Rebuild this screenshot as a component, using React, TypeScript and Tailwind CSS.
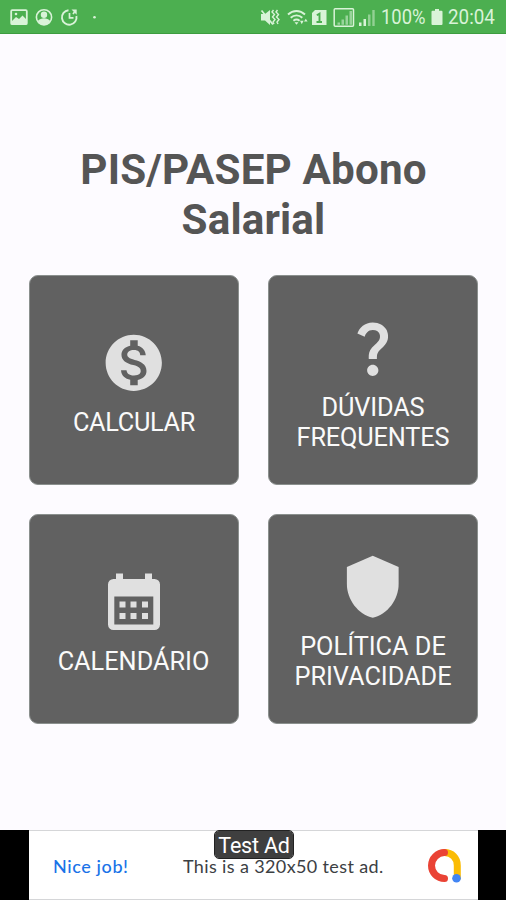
import React from 'react';

interface MenuCardProps {
  lines: string[];
  spacing: string;
  children: React.ReactNode;
}

const MenuCard: React.FC<MenuCardProps> = ({ lines, spacing, children }) => (
  <button className="flex h-[210px] w-[210px] flex-col items-center justify-center rounded-[9px] border border-[#8b908e] bg-[#616161] pt-[6px]">
    {children}
    <span className={`mt-[12px] text-[25.3px] leading-[29.5px] text-[#fafafa] ${spacing}`}>
      {lines.map((line) => (
        <span key={line} className="block whitespace-nowrap">{line}</span>
      ))}
    </span>
  </button>
);

const iconClass = 'h-[67.5px] w-[67.5px] shrink-0 fill-[#e0e0e0]';

const StatusBar = () => (
  <header className="flex h-[34px] items-center justify-between border-b border-[#3d9c40] bg-[#4caf50] pl-[10px] pr-[9px] text-[#d9f3d8]">
    <svg className="h-[34px] w-[90px]" viewBox="10 0 90 34" fill="none">
      <rect x="11.2" y="10.2" width="15.6" height="14" rx="1" stroke="currentColor" strokeWidth="1.8" />
      <path d="M12 21l4-4 3 2 3.500-3.500L26 19v5H12z" fill="currentColor" />
      <circle cx="16" cy="14" r="1.300" fill="currentColor" />
      <circle cx="44" cy="17.300" r="7.600" stroke="currentColor" strokeWidth="1.600" />
      <circle cx="44" cy="14.800" r="3.200" fill="currentColor" />
      <path d="M37.800 21c1.500-2 3.800-2.800 6.200-2.800s4.700.8 6.200 2.800c-1.200 2.500-3.400 4-6.200 4s-5-1.500-6.200-4z" fill="currentColor" />
      <path d="M68.500 10.200a7.300 7.300 0 1 0 7.900 5.800" stroke="currentColor" strokeWidth="1.900" />
      <path d="M69.500 13v4.800H73.500M73 14l1.500-2" stroke="currentColor" strokeWidth="1.700" />
      <path d="M71.500 9.500h5.200v5.200z" fill="currentColor" />
      <circle cx="94.500" cy="17.300" r="1.300" fill="currentColor" />
    </svg>
    <div className="flex items-center">
      <svg className="h-[34px] w-[120px]" viewBox="258 0 120 34" fill="none">
        <path d="M261 14h4l5-4v15l-5-4.500h-4z" fill="currentColor" />
        <path d="M261.500 10.500l11.500 14" stroke="currentColor" strokeWidth="1.700" />
        <path d="M273.500 10l-1.500 2 2.500 2.500-2 2.500 2.500 2.500-2 2.500 1 2M277.500 10l-1.500 2 2.500 2.500-2 2.500 2.500 2.500-2 2.500 1 2" stroke="currentColor" strokeWidth="1.400" />
        <path d="M288 14.500c5-4.700 12-4.700 17 0M290.700 17.700c3.400-3.100 8.200-3.100 11.600 0M293.400 20.700c1.900-1.500 4.300-1.500 6.200 0" stroke="currentColor" strokeWidth="1.900" />
        <path d="M294.500 22.300h4l-2 2.500zM300 20.700h3.600l-1.800 3.600zM304 21.500l1.800-2.800 1.800 2.800z" fill="currentColor" />
        <path d="M315 10h11.500v15H312V13z" fill="currentColor" />
        <path d="M316.800 15.200l2.700-1.600v8.600M316.500 22h5.500" stroke="#4caf50" strokeWidth="1.900" />
        <rect x="334.200" y="8.700" width="19.300" height="17.500" rx="1" stroke="currentColor" strokeWidth="1.500" />
        <path d="M337.500 22.500h2.500v2.300h-2.500zM341.500 19.500h2.500v5.300h-2.500zM345.500 15.500h2.500v9.300h-2.500zM349.500 11h2.500v13.800h-2.500z" fill="currentColor" opacity=".55" />
        <path d="M359 22.500h2.500V26H359zM363.500 19h2.500v7h-2.500z" fill="currentColor" />
        <path d="M368 14.500h2.500V26H368zM372.300 10h2.400v16h-2.400z" fill="currentColor" opacity=".5" />
      </svg>
      <span className="ml-[3px] mt-px w-[46px] origin-left scale-x-[0.92] whitespace-nowrap text-[20px] leading-[34px]">100%</span>
      <svg className="ml-1 h-[18px] w-[12px]" viewBox="0 0 12 18" fill="currentColor">
        <path d="M4 1h4v1.800h2.500a1 1 0 0 1 1 1V16a1 1 0 0 1-1 1h-9a1 1 0 0 1-1-1V3.800a1 1 0 0 1 1-1H4z" />
      </svg>
      <span className="ml-[5px] mr-px mt-px w-[48px] origin-left scale-x-[0.94] whitespace-nowrap text-[20px] leading-[34px]">20:04</span>
    </div>
  </header>
);

const AdBanner = () => (
  <footer className="flex h-[70px] justify-center bg-black">
    <div className="relative ml-px flex w-[449px] items-center border-y border-[#d5d6d8] bg-white font-['Lato',sans-serif] text-[18px]">
      <span className="ml-[24px] mt-[2px] w-[130px] whitespace-nowrap font-medium tracking-[0.6px] text-[#1a73e8]">Nice job!</span>
      <span className="mt-[2px] w-[243px] whitespace-nowrap tracking-[0.37px] text-[#3c4043]">This is a 320x50 test ad.</span>
      <svg className="mt-[2px] h-[36px] w-[36px]" viewBox="0 0 36 36" fill="none" strokeWidth="7" strokeLinecap="round">
        <path d="M18.500 4.600c7.500 0 12.800 5.400 12.800 12.800v12" stroke="#fbbc04" />
        <path d="M18.500 4.600a13 13 0 1 0 0 26" stroke="#ea4335" />
        <circle cx="30.500" cy="30.300" r="4.300" fill="#4285f4" />
      </svg>
      <span className="absolute left-[186px] top-0 h-[27px] w-[78px] whitespace-nowrap rounded-[4px] bg-[#3f3f3f] text-center font-['Roboto',sans-serif] text-[21.500px] leading-[30px] tracking-[-0.2px] text-white outline outline-1 outline-[#222]">Test Ad</span>
    </div>
  </footer>
);

export default function App() {
  return (
    <div className="flex h-[900px] w-[506px] flex-col overflow-hidden bg-[#fdfbff] font-['Roboto',sans-serif]">
      <StatusBar />
      <main className="flex flex-1 flex-col items-center pt-[111px]">
        <h1 className="ml-px text-center text-[42.2px] font-bold leading-[50px] tracking-[0.15px] text-[#555555]">
          PIS/PASEP Abono<br />Salarial
        </h1>
        <div className="mt-[30px] grid grid-cols-2 gap-[29px]">
          <MenuCard lines={['CALCULAR']} spacing="tracking-[-0.3px] ml-px">
            <svg className={iconClass} viewBox="0 0 24 24">
              <path d="M12 2C6.480 2 2 6.480 2 12s4.480 10 10 10 10-4.480 10-10S17.520 2 12 2zm1.410 16.090V20h-2.670v-1.930c-1.710-.36-3.160-1.460-3.270-3.400h1.960c.1 1.050.82 1.870 2.650 1.870 1.960 0 2.400-.98 2.400-1.590 0-.83-.44-1.610-2.670-2.140-2.480-.6-4.180-1.620-4.180-3.670 0-1.720 1.390-2.840 3.110-3.210V4h2.670v1.950c1.860.45 2.790 1.860 2.850 3.390H14.300c-.05-1.110-.64-1.870-2.220-1.870-1.500 0-2.400.68-2.400 1.640 0 .84.65 1.390 2.670 1.910s4.180 1.390 4.180 3.910c-.01 1.830-1.380 2.830-3.120 3.160z" />
            </svg>
          </MenuCard>
          <MenuCard lines={['DÚVIDAS', 'FREQUENTES']} spacing="tracking-[-0.15px] ml-px">
            <svg className={iconClass} viewBox="0 0 24 24">
              <path d="M11.070 12.850c.77-1.390 2.250-2.210 3.110-3.440.91-1.290.4-3.700-2.180-3.700-1.690 0-2.520 1.280-2.870 2.340L6.540 6.960C7.250 4.830 9.180 3 11.990 3c2.350 0 3.960 1.070 4.780 2.410.7 1.150 1.110 3.300.03 4.900-1.200 1.770-2.350 2.310-2.970 3.450-.25.46-.35.76-.35 2.240h-2.890c-.01-.78-.13-2.050.48-3.150zM14 20c0 1.100-.9 2-2 2s-2-.9-2-2 .9-2 2-2 2 .9 2 2z" />
            </svg>
          </MenuCard>
          <MenuCard lines={['CALENDÁRIO']} spacing="tracking-normal">
            <svg className={iconClass} viewBox="0 0 67.5 67.5">
              <path fillRule="evenodd" d="M16 5.600h7V11h22V5.600h7V11h2.500a5.500 5.500 0 0 1 5.500 5.500v40a5.500 5.500 0 0 1-5.500 5.500h-41A5.500 5.500 0 0 1 8 56.500v-40A5.500 5.500 0 0 1 13.500 11H16zM14.300 28.500v28h39v-28z" />
              <path d="M19.500 33.500h6v6h-6zM30.500 33.500h6v6h-6zM42 33.500h6v6h-6zM19.500 45h6v6h-6zM30.500 45h6v6h-6zM42 45h6v6h-6z" />
            </svg>
          </MenuCard>
          <MenuCard lines={['POLÍTICA DE', 'PRIVACIDADE']} spacing="tracking-normal ml-px">
            <svg className={iconClass} viewBox="0 0 24 24">
              <path d="M12 1L2.800 5v6c0 5.550 3.900 10.740 9.200 12 5.300-1.260 9.200-6.450 9.200-12V5z" />
            </svg>
          </MenuCard>
        </div>
      </main>
      <AdBanner />
    </div>
  );
}
